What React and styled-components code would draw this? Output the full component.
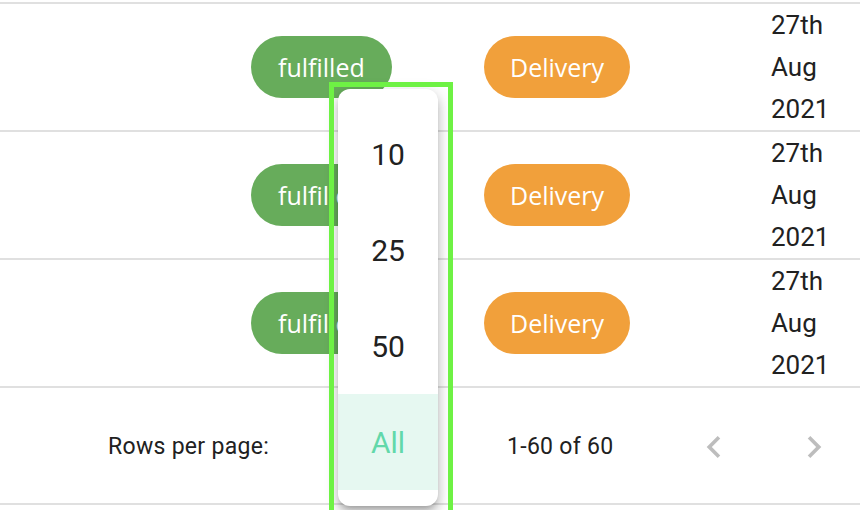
import React from "react";
import styled, { createGlobalStyle } from "styled-components";

const Global = createGlobalStyle`
  html, body { margin: 0; padding: 0; background: #fff; }
  body { font-family: Roboto, "Liberation Sans", sans-serif; }
`;

const Page = styled.div`
  position: relative;
  width: 860px;
  height: 510px;
  overflow: hidden;
  background: #fff;
  padding-top: 2px;
  box-sizing: border-box;
`;

const Table = styled.div`
  border-top: 2px solid #e0e0e0;
`;

const Row = styled.div`
  display: grid;
  grid-template-columns: 251px 233px 287px 89px;
  align-items: center;
  height: 126px;
  border-bottom: 2px solid #e0e0e0;
`;

const Cell = styled.div`
  display: flex;
  align-items: center;
`;

const Chip = styled.span`
  display: inline-flex;
  align-items: center;
  justify-content: center;
  height: 62px;
  padding: 0 ${(p) => p.$pad}px;
  border-radius: 31px;
  background: ${(p) => p.$bg};
  color: #fff;
  font-family: "Open Sans", "Noto Sans", sans-serif;
  font-size: 25px;
  line-height: 1;
  box-sizing: border-box;
`;

const DateText = styled.div`
  font-family: Roboto, sans-serif;
  font-size: 26px;
  line-height: 42px;
  color: #212121;
`;

const Footer = styled.div`
  display: flex;
  align-items: center;
  height: 117px;
  padding-left: 108px;
  padding-top: 2px;
  box-sizing: border-box;
  border-bottom: 2px solid #e0e0e0;
  color: #212121;
  font-family: Roboto, sans-serif;
  font-size: 23px;
  letter-spacing: 0.3px;
`;

const Label = styled.span`
  width: 399px;
  flex: none;
`;

const Displayed = styled.span`
  width: 185px;
  flex: none;
`;

const Actions = styled.div`
  display: flex;
  gap: 56px;
`;

const IconButton = styled.span`
  display: block;
  width: 44px;
  height: 44px;
  color: rgba(0, 0, 0, 0.26);
`;

const Menu = styled.div`
  position: absolute;
  left: 338px;
  top: 89px;
  width: 100px;
  padding: 17px 0 16px;
  background: #fff;
  border-radius: 12px;
  box-shadow: 0 5px 5px -3px rgba(0, 0, 0, 0.2), 0 8px 10px 1px rgba(0, 0, 0, 0.14),
    0 3px 14px 2px rgba(0, 0, 0, 0.12);
  box-sizing: border-box;
`;

const MenuItem = styled.div`
  height: 96px;
  display: flex;
  align-items: center;
  justify-content: center;
  font-family: Roboto, sans-serif;
  font-size: 30px;
  color: ${(p) => (p.$selected ? "#62d8aa" : "#212121")};
  background: ${(p) => (p.$selected ? "#e6f8f1" : "transparent")};
`;

const Highlight = styled.div`
  position: absolute;
  left: 329px;
  top: 82px;
  width: 124px;
  height: 440px;
  border: 5px solid #6ef244;
  box-sizing: border-box;
  pointer-events: none;
`;

const rows = [0, 1, 2];

const ChevronLeft = () => (
  <svg viewBox="0 0 24 24" width="44" height="44" fill="currentColor">
    <path d="M15.41 7.41L14 6l-6 6 6 6 1.41-1.41L10.83 12z" />
  </svg>
);
const ChevronRight = () => (
  <svg viewBox="0 0 24 24" width="44" height="44" fill="currentColor">
    <path d="M10 6L8.59 7.41 13.17 12l-4.58 4.59L10 18l6-6z" />
  </svg>
);

export default function App() {
  return (
    <>
      <Global />
      <Page>
        <Table>
          {rows.map((r) => (
            <Row key={r}>
              <Cell />
              <Cell>
                <Chip $bg="#67ac5b" $pad={27}>fulfilled</Chip>
              </Cell>
              <Cell>
                <Chip $bg="#f1a03b" $pad={26}>Delivery</Chip>
              </Cell>
              <Cell>
                <DateText>
                  27th
                  <br />
                  Aug
                  <br />
                  2021
                </DateText>
              </Cell>
            </Row>
          ))}
          <Footer>
            <Label>Rows per page:</Label>
            <Displayed>1-60 of 60</Displayed>
            <Actions>
              <IconButton>
                <ChevronLeft />
              </IconButton>
              <IconButton>
                <ChevronRight />
              </IconButton>
            </Actions>
          </Footer>
        </Table>
        <Menu>
          <MenuItem>10</MenuItem>
          <MenuItem>25</MenuItem>
          <MenuItem>50</MenuItem>
          <MenuItem $selected>All</MenuItem>
        </Menu>
        <Highlight />
      </Page>
    </>
  );
}
